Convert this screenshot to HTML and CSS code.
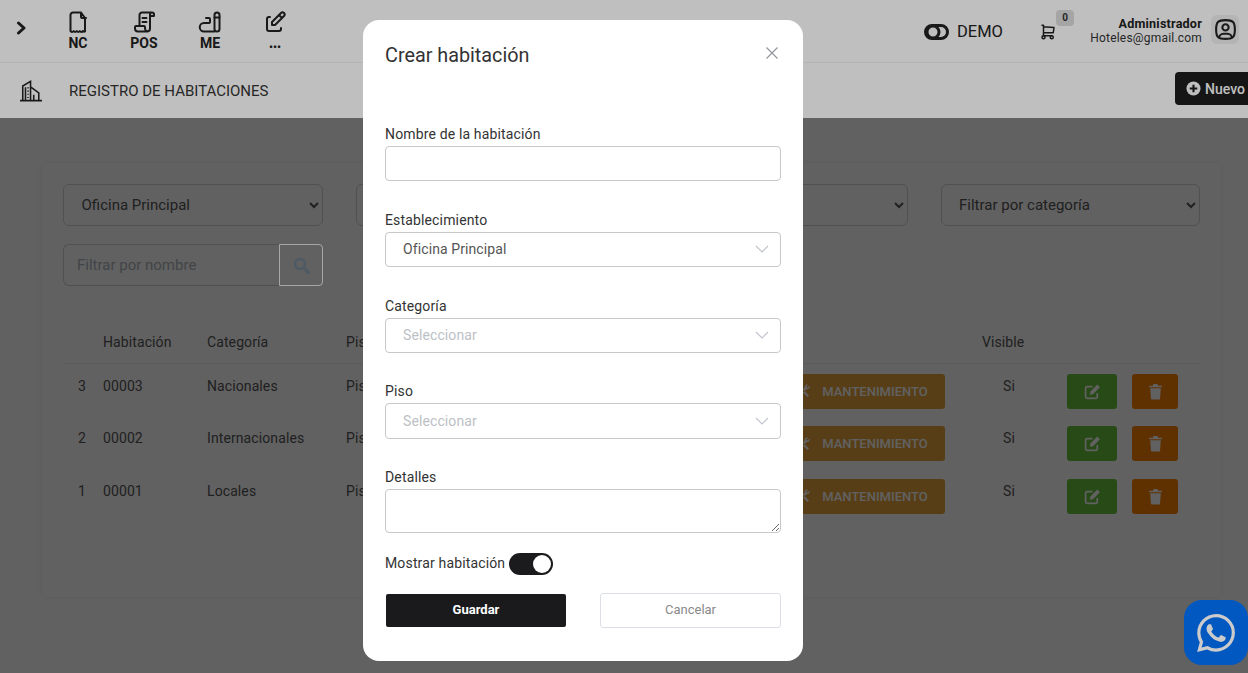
FILE: index.html
```html
<!DOCTYPE html>
<html lang="es">
<head>
    <meta charset="UTF-8">
    <meta name="viewport" content="width=device-width, initial-scale=1.0">
    <title>Registro de habitaciones</title>
    <link rel="stylesheet" href="styles.css">
</head>

<body>
    <header class="header">
        <div class="topbar">
            <button class="toggle" type="button">
                <svg width="12" height="14" viewBox="0 0 12 14"><path d="M2.5 2l5.5 5-5.5 5" class="line line-bold"/></svg>
            </button>
            <nav class="shortcuts">
                <a class="shortcut">
                    <svg class="icon-nav" viewBox="0 0 24 24"><path class="line" d="M15 2.500H7a2.500 2.500 0 0 0-2.500 2.500v16c1.200 1.300 2.200 1.300 3.200 0 1 1.300 2 1.300 3 0 1 1.300 2.200 1.300 3.100 0 1 1.300 2.100 1.300 3.200 0 .7.800 1.300 1 2 .5V8zM15 2.500V7a1 1 0 0 0 1 1h4"/></svg>
                    <span>NC</span>
                </a>
                <a class="shortcut">
                    <svg class="icon-nav" viewBox="0 0 24 24"><path class="line" d="M20 2.500H10A2.500 2.500 0 0 0 7.500 5v10.500M20 2.500a2 2 0 0 1 2 2V6h-4V4.500a2 2 0 0 1 2-2M18 6v12.500a3 3 0 0 1-3 3H6a3 3 0 0 1-3-3V17a1 1 0 0 1 1-1h8a1 1 0 0 1 1 1v1.500a3 3 0 0 0 2 2.800M10.500 8h4M10.500 12h4"/></svg>
                    <span>POS</span>
                </a>
                <a class="shortcut">
                    <svg class="icon-nav" viewBox="0 0 24 24"><rect class="line" x="16.500" y="2.500" width="5" height="19" rx="2.500"/><path class="line" d="M16.500 7.500h5M8 8h3a1 1 0 0 1 1 1v3a1 1 0 0 1-1 1H6a4 4 0 0 0 0 8.500h10.500"/></svg>
                    <span>ME</span>
                </a>
                <a class="shortcut shortcut-more">
                    <svg class="icon-nav" viewBox="0 0 24 24"><path class="line" d="M7 7H6a2 2 0 0 0-2 2v10a2 2 0 0 0 2 2h10a2 2 0 0 0 2-2v-1"/><path class="line" d="M21 6a2.100 2.100 0 0 0-3-3l-9 9v3h3zM16 5l3 3"/></svg>
                    <span class="dots">•••</span>
                </a>
            </nav>
            <div class="topbar-right">
                <div class="demo">
                    <svg width="25" height="16" viewBox="0 0 25 16"><rect class="line line-bold" x="1.500" y="1.500" width="22" height="13" rx="6.500"/><circle class="line line-bold" cx="9" cy="8" r="6"/></svg>
                    <span>DEMO</span>
                </div>
                <div class="cart">
                    <svg width="18" height="18" viewBox="0 0 24 24"><circle class="line" cx="6" cy="19" r="2"/><circle class="line" cx="17" cy="19" r="2"/><path class="line" d="M17 17H6V3H4M6 5l14 1-1 7H6"/></svg>
                    <span class="cart-badge">0</span>
                </div>
                <div class="user">
                    <strong>Administrador</strong>
                    <span>Hoteles@gmail.com</span>
                </div>
                <div class="avatar">
                    <svg width="25" height="25" viewBox="0 0 24 24"><path class="line" d="M12 13a3 3 0 1 0 0-6 3 3 0 0 0 0 6zM12 3c7.200 0 9 1.800 9 9s-1.800 9-9 9-9-1.800-9-9 1.800-9 9-9zM6 20.050V20a4 4 0 0 1 4-4h4a4 4 0 0 1 4 4v.050"/></svg>
                </div>
            </div>
        </div>
        <div class="pagebar">
            <div class="pagebar-title">
                <svg class="icon-page" viewBox="0 0 24 24"><path class="line-thin" d="M0 22.500h24M3 22.500V6.500L11.500 1.500v21M6 22.500V8M11.500 7.500l9 6.500v8.500M15 16v6.500M8.800 8v1.200M8.800 11.500v1.200M8.800 15v1.200M8.800 18.500v1.200"/></svg>
                <span>REGISTRO DE HABITACIONES</span>
            </div>
            <button class="btn-new" type="button">
                <svg width="15" height="15" viewBox="0 0 16 16"><circle cx="8" cy="8" r="7.500" fill="#fff"/><path d="M8 4v8M4 8h8" stroke="#1c1c1c" stroke-width="2.200"/></svg>
                Nuevo
            </button>
        </div>
    </header>

    <main class="content">
        <section class="card">
            <div class="filters">
                <select class="filter-select"><option>Oficina Principal</option></select>
                <select class="filter-select"><option>Filtrar por piso</option></select>
                <select class="filter-select"><option>Filtrar por estado</option></select>
                <select class="filter-select"><option>Filtrar por categoría</option></select>
            </div>
            <div class="search">
                <input class="search-input" type="text" placeholder="Filtrar por nombre">
                <button class="search-btn" type="button">
                    <svg width="17" height="17" viewBox="0 0 17 17"><circle cx="7" cy="7" r="5" fill="none" stroke="#4d5a64" stroke-width="2.500"/><path d="M11 11l4.500 4.500" stroke="#4d5a64" stroke-width="3" stroke-linecap="round"/></svg>
                </button>
            </div>

            <table class="rooms">
                <colgroup>
                    <col class="col-num"><col class="col-room"><col class="col-cat"><col class="col-floor"><col class="col-state"><col class="col-visible"><col>
                </colgroup>
                <thead>
                    <tr><th></th><th>Habitación</th><th>Categoría</th><th>Piso</th><th></th><th>Visible</th><th></th></tr>
                </thead>
                <tbody>
                    <tr>
                        <td>3</td><td>00003</td><td>Nacionales</td><td>Piso 1</td>
                        <td><button class="btn-state" type="button"><svg class="icon-tools" viewBox="0 0 14 14"><path class="tool" d="M1 2.500L2.500 1l10.500 10.500-1.500 1.500zM13.500 1.500l-2.200 2.200-1-1L12 .8c-1.700-.8-3.700.6-3.300 2.600L1.200 11a1.200 1.200 0 0 0 1.800 1.800l7.500-7.600c2 .4 3.700-1.500 3-3.700z"/></svg>MANTENIMIENTO</button></td>
                        <td class="cell-visible">Si</td>
                        <td class="cell-actions">
                            <button class="btn-edit" type="button"><svg class="icon-edit" viewBox="0 0 16 16"><path class="edit-box" d="M12.500 9.500V13a1.500 1.500 0 0 1-1.500 1.500H3A1.500 1.500 0 0 1 1.500 13V5A1.500 1.500 0 0 1 3 3.500h5"/><path class="edit-pen" d="M6 8l6.500-6.500 2.500 2.500L8.500 10.500 5.500 11z"/></svg></button>
                            <button class="btn-delete" type="button"><svg class="icon-trash" viewBox="0 0 14 16"><path class="trash" d="M1 2.500h3.500L5.200 1h3.600l.7 1.500H13V4H1zM2 5h10l-.7 9.500a1 1 0 0 1-1 1H3.700a1 1 0 0 1-1-1z"/></svg></button>
                        </td>
                    </tr>
                    <tr>
                        <td>2</td><td>00002</td><td>Internacionales</td><td>Piso 1</td>
                        <td><button class="btn-state" type="button"><svg class="icon-tools" viewBox="0 0 14 14"><path class="tool" d="M1 2.500L2.500 1l10.500 10.500-1.500 1.500zM13.500 1.500l-2.200 2.200-1-1L12 .8c-1.700-.8-3.700.6-3.300 2.600L1.200 11a1.200 1.200 0 0 0 1.800 1.800l7.500-7.600c2 .4 3.700-1.500 3-3.700z"/></svg>MANTENIMIENTO</button></td>
                        <td class="cell-visible">Si</td>
                        <td class="cell-actions">
                            <button class="btn-edit" type="button"><svg class="icon-edit" viewBox="0 0 16 16"><path class="edit-box" d="M12.500 9.500V13a1.500 1.500 0 0 1-1.500 1.500H3A1.500 1.500 0 0 1 1.500 13V5A1.500 1.500 0 0 1 3 3.500h5"/><path class="edit-pen" d="M6 8l6.500-6.500 2.500 2.500L8.500 10.500 5.500 11z"/></svg></button>
                            <button class="btn-delete" type="button"><svg class="icon-trash" viewBox="0 0 14 16"><path class="trash" d="M1 2.500h3.500L5.200 1h3.600l.7 1.500H13V4H1zM2 5h10l-.7 9.500a1 1 0 0 1-1 1H3.700a1 1 0 0 1-1-1z"/></svg></button>
                        </td>
                    </tr>
                    <tr>
                        <td>1</td><td>00001</td><td>Locales</td><td>Piso 1</td>
                        <td><button class="btn-state" type="button"><svg class="icon-tools" viewBox="0 0 14 14"><path class="tool" d="M1 2.500L2.500 1l10.500 10.500-1.500 1.500zM13.500 1.500l-2.200 2.200-1-1L12 .8c-1.700-.8-3.700.6-3.300 2.600L1.200 11a1.200 1.200 0 0 0 1.800 1.800l7.500-7.600c2 .4 3.700-1.500 3-3.700z"/></svg>MANTENIMIENTO</button></td>
                        <td class="cell-visible">Si</td>
                        <td class="cell-actions">
                            <button class="btn-edit" type="button"><svg class="icon-edit" viewBox="0 0 16 16"><path class="edit-box" d="M12.500 9.500V13a1.500 1.500 0 0 1-1.500 1.500H3A1.500 1.500 0 0 1 1.500 13V5A1.500 1.500 0 0 1 3 3.500h5"/><path class="edit-pen" d="M6 8l6.500-6.500 2.500 2.500L8.500 10.500 5.500 11z"/></svg></button>
                            <button class="btn-delete" type="button"><svg class="icon-trash" viewBox="0 0 14 16"><path class="trash" d="M1 2.500h3.500L5.200 1h3.600l.7 1.500H13V4H1zM2 5h10l-.7 9.500a1 1 0 0 1-1 1H3.700a1 1 0 0 1-1-1z"/></svg></button>
                        </td>
                    </tr>
                </tbody>
            </table>
        </section>
    </main>

    <a class="whatsapp">
        <svg width="38" height="38" viewBox="0 0 24 24"><path fill="#cbcbcb" d="M17.472 14.382c-.297-.149-1.758-.867-2.030-.967-.273-.099-.471-.148-.670.150-.197.297-.767.966-.940 1.164-.173.199-.347.223-.644.075-.297-.150-1.255-.463-2.390-1.475-.883-.788-1.480-1.761-1.653-2.059-.173-.297-.018-.458.130-.606.134-.133.298-.347.446-.520.149-.174.198-.298.298-.497.099-.198.050-.371-.025-.520-.075-.149-.669-1.612-.916-2.207-.242-.579-.487-.500-.669-.510-.173-.008-.371-.010-.570-.010-.198 0-.520.074-.792.372-.272.297-1.040 1.016-1.040 2.479 0 1.462 1.065 2.875 1.213 3.074.149.198 2.096 3.200 5.077 4.487.709.306 1.262.489 1.694.625.712.227 1.360.195 1.871.118.571-.085 1.758-.719 2.006-1.413.248-.694.248-1.289.173-1.413-.074-.124-.272-.198-.570-.347m-5.421 7.403h-.004a9.870 9.870 0 0 1-5.031-1.378l-.361-.214-3.741.982.998-3.648-.235-.374a9.860 9.860 0 0 1-1.510-5.260c.001-5.450 4.436-9.884 9.888-9.884 2.640 0 5.122 1.030 6.988 2.898a9.825 9.825 0 0 1 2.893 6.994c-.003 5.450-4.437 9.884-9.885 9.884m8.413-18.297A11.815 11.815 0 0 0 12.050 0C5.495 0 .160 5.335.157 11.892c0 2.096.547 4.142 1.588 5.945L.057 24l6.305-1.654a11.882 11.882 0 0 0 5.683 1.448h.005c6.554 0 11.890-5.335 11.893-11.893a11.821 11.821 0 0 0-3.480-8.413z"/></svg>
    </a>

    <div class="modal">
        <div class="modal-head">
            <h2>Crear habitación</h2>
            <svg class="modal-close" width="14" height="14" viewBox="0 0 14 14"><path d="M1.500 1.500l11 11M12.500 1.500l-11 11" stroke="#909399" stroke-width="1.100"/></svg>
        </div>
        <form class="modal-form">
            <div class="field">
                <label for="roomName">Nombre de la habitación</label>
                <input class="control" type="text" id="roomName">
            </div>
            <div class="field">
                <label>Establecimiento</label>
                <div class="control picker">
                    <span>Oficina Principal</span>
                    <svg width="14" height="8" viewBox="0 0 14 8"><path d="M1 1l6 6 6-6" fill="none" stroke="#c0c4cc" stroke-width="1.100"/></svg>
                </div>
            </div>
            <div class="field">
                <label>Categoría</label>
                <div class="control picker is-empty">
                    <span>Seleccionar</span>
                    <svg width="14" height="8" viewBox="0 0 14 8"><path d="M1 1l6 6 6-6" fill="none" stroke="#c0c4cc" stroke-width="1.100"/></svg>
                </div>
            </div>
            <div class="field">
                <label>Piso</label>
                <div class="control picker is-empty">
                    <span>Seleccionar</span>
                    <svg width="14" height="8" viewBox="0 0 14 8"><path d="M1 1l6 6 6-6" fill="none" stroke="#c0c4cc" stroke-width="1.100"/></svg>
                </div>
            </div>
            <div class="field field-last">
                <label for="roomDetails">Detalles</label>
                <textarea class="control control-area" id="roomDetails"></textarea>
            </div>
            <div class="show-room">
                <span class="show-room-label">Mostrar habitación</span>
                <span class="switch"><span class="switch-knob"></span></span>
            </div>
            <div class="modal-actions">
                <button class="btn-save" type="button">Guardar</button>
                <button class="btn-cancel" type="button">Cancelar</button>
            </div>
        </form>
    </div>
</body>
</html>
```

FILE: styles.css
```css
* {
    box-sizing: border-box;
}

body {
    font-family: Roboto, "Liberation Sans", sans-serif;
    background-color: #fff;
    color: #555;
    margin: 0;
    height: 100vh;
    overflow: hidden;
}

button {
    font-family: inherit;
    cursor: pointer;
}

.line {
    fill: none;
    stroke: #222;
    stroke-width: 2;
    stroke-linecap: round;
    stroke-linejoin: round;
}

.line-bold {
    stroke-width: 3;
}

.line-thin {
    fill: none;
    stroke: #222;
    stroke-width: 1.7;
}

/* header, dimmed a little by the modal backdrop */
.header {
    position: relative;
    height: 118px;
    background-color: #fff;
}

.header::after {
    content: "";
    position: absolute;
    inset: 0;
    background-color: rgba(0, 0, 0, 0.25);
    pointer-events: none;
}

.topbar {
    display: flex;
    align-items: flex-start;
    height: 63px;
    border-bottom: 1px solid #f0f0f0;
}

.toggle {
    width: 45px;
    height: 59px;
    padding: 0 2px 0 0;
    background: none;
    border: none;
}

.shortcuts {
    display: flex;
    padding-top: 10px;
}

.shortcut {
    display: flex;
    flex-direction: column;
    align-items: center;
    width: 66px;
    color: #222;
    font-size: 14px;
    font-weight: 700;
    line-height: 18px;
}

.shortcut-more {
    margin-left: -1px;
}

.icon-nav {
    width: 24px;
    height: 24px;
}

.dots {
    font-size: 11px;
    line-height: 28px;
}

.topbar-right {
    display: flex;
    align-items: flex-start;
    margin-left: auto;
    padding: 15px 9px 0 0;
}

.demo {
    display: flex;
    align-items: center;
    gap: 8px;
    width: 115px;
    padding-top: 7px;
    color: #222;
    font-size: 16.5px;
}

.cart {
    position: relative;
    display: flex;
    width: 52px;
    padding-top: 8px;
}

.cart-badge {
    position: absolute;
    top: -5px;
    left: 17px;
    width: 18px;
    height: 16px;
    background-color: #dcdcdc;
    border-radius: 4px;
    color: #333;
    font-size: 10px;
    font-weight: 700;
    line-height: 16px;
    text-align: center;
}

.user {
    display: flex;
    flex-direction: column;
    align-items: flex-end;
    width: 111px;
    padding-top: 1px;
    color: #333;
    font-size: 12px;
    letter-spacing: 0.2px;
    line-height: 15px;
    white-space: nowrap;
}

.user strong {
    color: #222;
    font-size: 12.6px;
}

.avatar {
    display: flex;
    align-items: center;
    justify-content: center;
    width: 28px;
    height: 29px;
    margin-left: 9px;
    background-color: #f0f0f0;
    border-radius: 6px;
}

.pagebar {
    display: flex;
    align-items: center;
    justify-content: space-between;
    height: 55px;
    padding: 0 0 0 20px;
}

.pagebar-title {
    display: flex;
    align-items: center;
    gap: 27px;
    color: #333;
    font-size: 15px;
}

.icon-page {
    width: 22px;
    height: 22px;
}

.btn-new {
    display: flex;
    align-items: center;
    gap: 4px;
    height: 33px;
    margin: -4px -8px 0 0;
    padding: 0 11px;
    background-color: #1c1c1c;
    border: none;
    border-radius: 4px;
    color: #fff;
    font-size: 14px;
    font-weight: 500;
}

/* page behind the modal */
.content {
    position: relative;
    height: calc(100vh - 118px);
    padding: 45px 27px 0 42px;
}

.content::after {
    content: "";
    position: absolute;
    inset: 0;
    background-color: rgba(0, 0, 0, 0.62);
    pointer-events: none;
}

.card {
    height: 434px;
    padding: 21px 21px 0;
    background-color: #fff;
    border-radius: 4px;
    box-shadow: 0 0 6px rgba(0, 0, 0, 0.07);
}

.filters {
    display: grid;
    grid-template-columns: repeat(4, 1fr);
    gap: 33px;
}

.filter-select {
    height: 42px;
    padding-left: 13.5px;
    background-color: #fff;
    border: 1px solid #ced4da;
    border-radius: 6px;
    color: #555;
    font-family: inherit;
    font-size: 15px;
}

.search {
    display: flex;
    width: 260px;
    height: 42px;
    margin-top: 18px;
}

.search-input {
    flex: 1;
    min-width: 0;
    padding: 0 13px;
    border: 1px solid #ced4da;
    border-right: none;
    border-radius: 6px 0 0 6px;
    font-family: inherit;
    font-size: 15px;
}

.search-input::placeholder {
    color: #adb5bd;
}

.search-btn {
    position: relative;
    z-index: 2;
    display: flex;
    align-items: center;
    justify-content: center;
    width: 44px;
    background: none;
    border: 1px solid #a6a6a6;
    border-radius: 0 4px 4px 0;
}

.rooms {
    width: 100%;
    margin-top: 34px;
    border-collapse: collapse;
    table-layout: fixed;
    font-size: 14px;
    letter-spacing: 0.1px;
}

.col-num { width: 40px; }
.col-room { width: 104px; }
.col-cat { width: 139px; }
.col-floor { width: 433px; }
.col-state { width: 203px; }
.col-visible { width: 85px; }

.rooms th {
    height: 43px;
    padding: 1px 0 0;
    border-bottom: 1px solid #f0f0f0;
    font-weight: 400;
    text-align: left;
}

.rooms td {
    height: 52.5px;
    padding: 14px 0 0;
    vertical-align: top;
}

.rooms td:first-child {
    padding-left: 15px;
}

.rooms td.cell-visible {
    padding-left: 21px;
}

.rooms td.cell-actions {
    display: flex;
    gap: 15px;
    padding-top: 10px;
}

.btn-state,
.btn-edit,
.btn-delete {
    display: flex;
    align-items: center;
    justify-content: center;
    height: 35px;
    border: none;
    border-radius: 3px;
    color: #fff;
}

.btn-state {
    gap: 12px;
    width: 166px;
    margin-top: -4px;
    padding: 0;
    background-color: #e6a23c;
    font-size: 13px;
    font-weight: 500;
}

.btn-edit {
    width: 50px;
    background-color: #67c23a;
}

.btn-delete {
    width: 46px;
    background-color: #fa7e00;
}

.icon-tools {
    width: 14px;
    height: 14px;
}

.icon-edit {
    width: 17px;
    height: 17px;
}

.icon-trash {
    width: 15px;
    height: 17px;
}

.edit-box {
    fill: none;
    stroke: #fff;
    stroke-width: 1.6;
}

.edit-pen,
.trash,
.tool {
    fill: #fff;
}

.whatsapp {
    position: fixed;
    left: 1184px;
    top: 600px;
    z-index: 3;
    display: flex;
    align-items: center;
    justify-content: center;
    width: 64px;
    height: 65px;
    background-color: #0158c1;
    border-radius: 18px;
}

/* modal */
.modal {
    position: fixed;
    left: 363px;
    top: 20px;
    z-index: 5;
    width: 440px;
    height: 641px;
    padding: 22px;
    background-color: #fff;
    border-radius: 16px;
    color: #333;
}

.modal-head {
    display: flex;
    align-items: center;
    justify-content: space-between;
    height: 26px;
    padding-right: 2px;
}

.modal-head h2 {
    margin: 0;
    padding-top: 1px;
    color: #333;
    font-size: 19.8px;
    font-weight: 400;
    line-height: 26px;
}

.modal-close {
    margin-top: -4px;
}

.modal-form {
    margin-top: 56px;
}

.field {
    margin-bottom: 28.4px;
}

.field-last {
    margin-bottom: 20px;
}

.field label {
    display: block;
    margin-bottom: 2px;
    color: #333;
    font-size: 14px;
    letter-spacing: 0.15px;
    line-height: 20px;
}

.control {
    display: block;
    width: 100%;
    height: 35.4px;
    padding: 0 16px;
    background-color: #fff;
    border: 1px solid #c8c8c8;
    border-radius: 4px;
    color: #555;
    font-family: inherit;
    font-size: 14px;
    letter-spacing: 0.1px;
}

.control-area {
    height: 44px;
    padding: 5px 16px;
    resize: vertical;
}

.picker {
    display: flex;
    align-items: center;
    justify-content: space-between;
    padding-left: 17px;
    padding-right: 11px;
}

.is-empty {
    color: #bdbfc5;
}

.show-room {
    display: flex;
    align-items: center;
    gap: 4px;
    height: 22px;
    font-size: 14px;
    letter-spacing: 0.15px;
}

.show-room-label {
    padding-bottom: 2px;
}

.switch {
    display: flex;
    justify-content: flex-end;
    align-items: center;
    width: 44px;
    height: 22px;
    padding-right: 2px;
    background-color: #1b1b1d;
    border-radius: 11px;
}

.switch-knob {
    width: 18px;
    height: 18px;
    background-color: #fff;
    border-radius: 50%;
}

.modal-actions {
    display: flex;
    justify-content: space-between;
    margin-top: 18px;
}

.btn-save,
.btn-cancel {
    width: 181px;
    height: 35px;
    padding: 0 0 2px;
    border-radius: 3px;
    font-size: 13px;
}

.btn-save {
    width: 182px;
    background-color: #1a1a1c;
    background-clip: padding-box;
    border: 1px solid transparent;
    color: #fff;
    font-weight: 700;
}

.btn-cancel {
    background-color: #fff;
    border: 1px solid #dcdfe6;
    color: #8a8a8a;
}
```
